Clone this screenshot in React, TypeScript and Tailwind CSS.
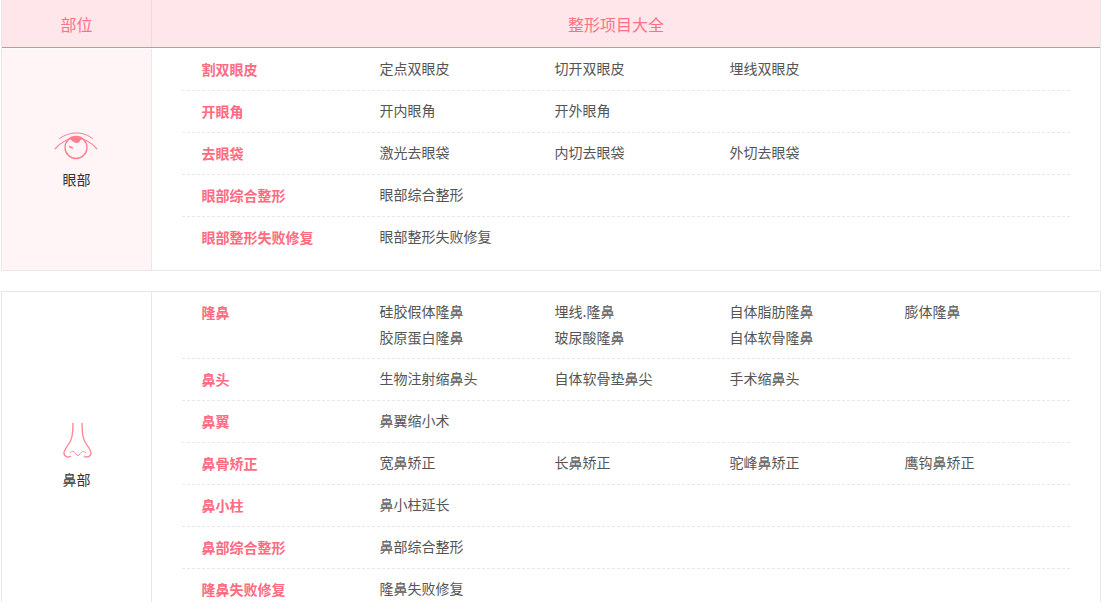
import React from 'react';

type Row = { title: string; items: string[] };

const eyeRows: Row[] = [
    { title: '割双眼皮', items: ['定点双眼皮', '切开双眼皮', '埋线双眼皮'] },
    { title: '开眼角', items: ['开内眼角', '开外眼角'] },
    { title: '去眼袋', items: ['激光去眼袋', '内切去眼袋', '外切去眼袋'] },
    { title: '眼部综合整形', items: ['眼部综合整形'] },
    { title: '眼部整形失败修复', items: ['眼部整形失败修复'] },
];

const noseRows: Row[] = [
    { title: '隆鼻', items: ['硅胶假体隆鼻', '埋线.隆鼻', '自体脂肪隆鼻', '膨体隆鼻', '胶原蛋白隆鼻', '玻尿酸隆鼻', '自体软骨隆鼻'] },
    { title: '鼻头', items: ['生物注射缩鼻头', '自体软骨垫鼻尖', '手术缩鼻头'] },
    { title: '鼻翼', items: ['鼻翼缩小术'] },
    { title: '鼻骨矫正', items: ['宽鼻矫正', '长鼻矫正', '驼峰鼻矫正', '鹰钩鼻矫正'] },
    { title: '鼻小柱', items: ['鼻小柱延长'] },
    { title: '鼻部综合整形', items: ['鼻部综合整形'] },
    { title: '隆鼻失败修复', items: ['隆鼻失败修复'] },
];

const EyeIcon = () => (
    <svg width="44" height="28" viewBox="0 0 44 28" fill="none" stroke="#ff7b8e" className="block">
        <path d="M5 7 C15 -1 30 -1 39 7" strokeWidth="1" />
        <path d="M1 17 C8 9 15 6 22 6 C30 6 37 10 43 17" strokeWidth="1.2" />
        <circle cx="22" cy="15.5" r="11" strokeWidth="1.3" />
        <path d="M15.5 5.5 C19 5 25 5 27.5 6 C26.5 10 24 11.5 22 11 C19.5 10.5 17 8.5 15.5 5.5 Z" fill="#ff7b8e" stroke="none" />
        <path d="M15 14.5 L19 16" strokeWidth="1.4" />
    </svg>
);

const NoseIcon = () => (
    <svg width="30" height="38" viewBox="0 0 30 38" fill="none" stroke="#ff8a9b" strokeWidth="1.4" className="block">
        <path d="M10 1 C10 9 10 15 7 20 C4 25 1 28 1 31 C1 35 6 36 8 34" />
        <path d="M19 1 C19 9 19 15 22 20 C25 25 28 28 28 31 C28 35 23 36 21 34" />
        <path d="M7 31 C9 28 12 30 13 32 C14 34 16 34 17 32 C18 30 21 28 23 31" strokeWidth="1" />
    </svg>
);

const Section = ({ rows, label, icon, side, gap }: { rows: Row[]; label: string; icon: React.ReactNode; side: string; gap: string }) => (
    <div className="flex">
        <div className={`w-[150px] shrink-0 flex flex-col items-center justify-center border-r border-[#e8e8e8] ${side}`}>
            {icon}
            <span className={`${gap} text-sm leading-5 text-[#333]`}>{label}</span>
        </div>
        <div className="flex-1 min-w-0 px-[30px]">
            {rows.map((row, i) => (
                <div
                    key={row.title}
                    className={`flex pt-[7px] ${i < rows.length - 1 ? 'pb-[7px] border-b border-dashed border-[#e8e8e8]' : 'pb-[19px]'}`}
                >
                    <div className="w-[197.5px] pl-[19.5px] shrink-0 text-sm leading-[27px] font-bold text-[#ff6b81]">{row.title}</div>
                    <div className="flex flex-wrap w-[700px] shrink-0 -mt-px mb-px">
                        {row.items.map((item) => (
                            <span key={item} className="w-[175px] text-sm leading-[26px] text-[#555]">{item}</span>
                        ))}
                    </div>
                </div>
            ))}
        </div>
    </div>
);

export default function App() {
    return (
        <div className="w-[1105px] h-[602px] overflow-hidden bg-white pl-px pr-1 font-['Microsoft_YaHei','Noto_Sans_CJK_SC',sans-serif]">
            <div className="border-x border-b border-[#e8e8e8]">
                <div className="flex h-[48px] bg-[#ffe6ea] border-b border-[#ff7b8e] text-base text-[#ff7087]">
                    <div className="w-[150px] shrink-0 flex items-center justify-center border-r border-[#fcd5da]">部位</div>
                    <div className="flex-1 flex items-center justify-center pr-5">整形项目大全</div>
                </div>
                <div className="pt-px">
                    <Section rows={eyeRows} label="眼部" icon={<div className="pt-[2px] pr-[2px]"><EyeIcon /></div>} side="bg-[#fff5f7]" gap="mt-[9px]" />
                </div>
            </div>
            <div className="mt-5 border border-[#e8e8e8]">
                <Section rows={noseRows} label="鼻部" icon={<div className="pl-[3px]"><NoseIcon /></div>} side="bg-white pb-[3px]" gap="mt-[9px]" />
            </div>
        </div>
    );
}
